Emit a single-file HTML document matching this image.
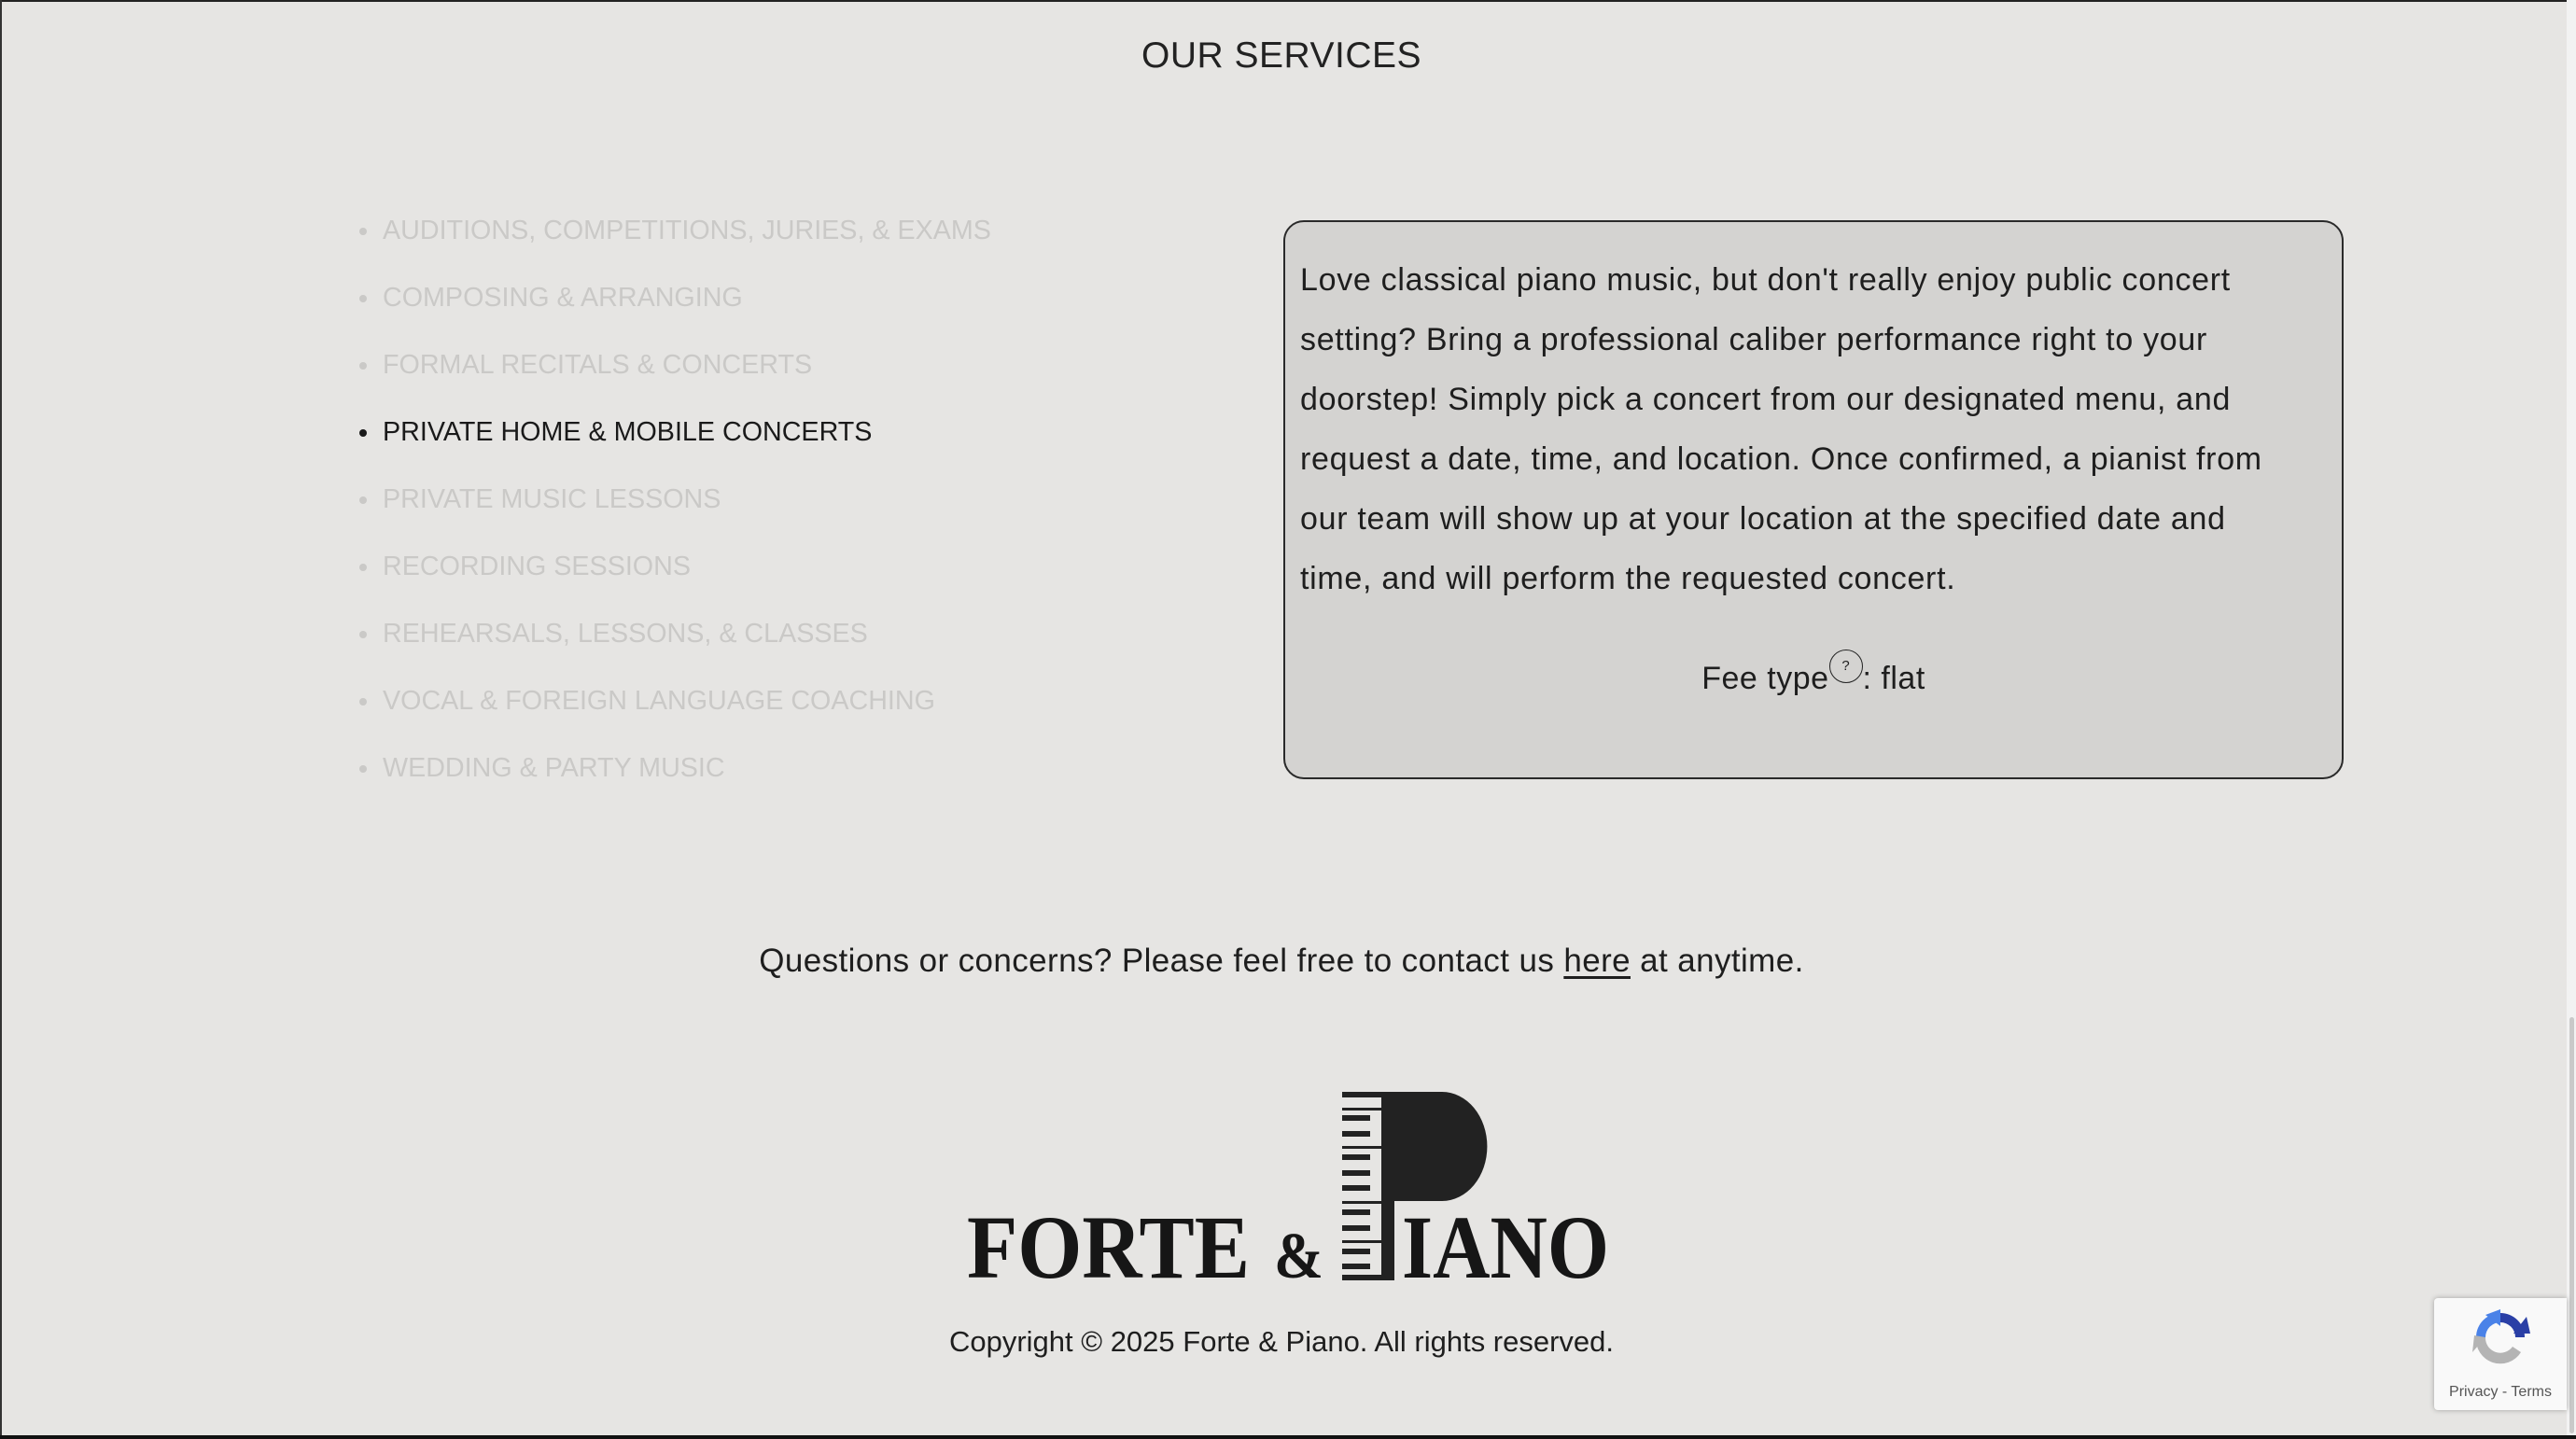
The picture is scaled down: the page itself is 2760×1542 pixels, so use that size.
<!DOCTYPE html>
<html><head><meta charset="utf-8">
<style>
html,body{margin:0;padding:0}
body{width:2760px;height:1542px;position:relative;overflow:hidden;background:#e6e5e3;font-family:"Liberation Sans",sans-serif;color:#1e1e1e}
.frame-top{position:absolute;left:0;top:0;width:2760px;height:2px;background:#222}
.frame-left{position:absolute;left:0;top:0;width:2px;height:1542px;background:#333}
.frame-bot{position:absolute;left:0;top:1538px;width:2760px;height:4px;background:#111}
.sb{position:absolute;left:2750px;top:0;width:10px;height:1538px;background:#f2f2f2}
.thumb{position:absolute;left:2753px;top:1090px;width:5px;height:446px;background:#c9c9c9;border-radius:3px}
h1{position:absolute;left:0;width:2746px;top:38px;margin:0;text-align:center;font-weight:normal;font-size:39px;letter-spacing:0.5px;color:#222}
ul{position:absolute;left:385px;top:223px;margin:0;padding:0;list-style:none}
li{position:relative;height:72px;line-height:48px;font-size:28.7px;padding-left:25px;color:#cac9c7;white-space:nowrap}
li:before{content:"";position:absolute;left:0;top:21px;width:8px;height:8px;border-radius:50%;background:#cac9c7}
li.on{color:#1a1a1a}
li.on:before{background:#1a1a1a}
.box{position:absolute;left:1375px;top:236px;width:1136px;height:599px;border:2px solid #2a2a2a;border-radius:22px;background:#d4d3d1;box-sizing:border-box}
.para{position:absolute;left:16px;top:30px;font-size:34px;letter-spacing:0.7px;line-height:64px;white-space:nowrap;color:#1e1e1e}
.fee{position:absolute;left:0;width:100%;top:458px;text-align:center;font-size:34px;letter-spacing:0.5px}
.q{display:inline-block;width:36px;height:36px;border:1.5px solid #222;border-radius:50%;font-size:15px;line-height:34px;text-align:center;vertical-align:20px;box-sizing:border-box;letter-spacing:0}
.contact{position:absolute;left:0;width:2746px;top:1010px;text-align:center;font-size:35px;letter-spacing:0.4px}
.contact u{text-underline-offset:5px}
.copy{position:absolute;left:0;width:2746px;top:1420px;text-align:center;font-size:31px}
.cap{position:absolute;left:2608px;top:1391px;width:142px;height:120px;background:#f9f9f9;border-radius:4px 0 0 4px;box-shadow:0 0 6px rgba(0,0,0,.3)}
.cap span{position:absolute;left:0;width:142px;top:92px;text-align:center;font-size:16px;color:#555}
</style></head><body>
<div class="frame-top"></div><div class="frame-left"></div>
<div class="sb"></div><div class="thumb"></div>
<h1>OUR SERVICES</h1>
<ul>
<li>AUDITIONS, COMPETITIONS, JURIES, &amp; EXAMS</li>
<li>COMPOSING &amp; ARRANGING</li>
<li>FORMAL RECITALS &amp; CONCERTS</li>
<li class="on">PRIVATE HOME &amp; MOBILE CONCERTS</li>
<li>PRIVATE MUSIC LESSONS</li>
<li>RECORDING SESSIONS</li>
<li>REHEARSALS, LESSONS, &amp; CLASSES</li>
<li>VOCAL &amp; FOREIGN LANGUAGE COACHING</li>
<li>WEDDING &amp; PARTY MUSIC</li>
</ul>
<div class="box">
<div class="para">Love classical piano music, but don't really enjoy public concert<br>setting? Bring a professional caliber performance right to your<br>doorstep! Simply pick a concert from our designated menu, and<br>request a date, time, and location. Once confirmed, a pianist from<br>our team will show up at your location at the specified date and<br>time, and will perform the requested concert.</div>
<div class="fee">Fee type<span class="q">?</span>: flat</div>
</div>
<div class="contact">Questions or concerns? Please feel free to contact us <u>here</u> at anytime.</div>
<svg style="position:absolute;left:1030px;top:1165px" width="700" height="210" viewBox="1030 1165 700 210">
<text x="1036" y="1369" font-family="Liberation Serif,serif" font-weight="bold" font-size="96" textLength="303" lengthAdjust="spacingAndGlyphs" fill="#161616">FORTE</text>
<text x="1365" y="1369" font-family="Liberation Serif,serif" font-weight="bold" font-size="70" textLength="53" lengthAdjust="spacingAndGlyphs" fill="#161616">&amp;</text>
<text x="1502" y="1369" font-family="Liberation Serif,serif" font-weight="bold" font-size="96" textLength="222" lengthAdjust="spacingAndGlyphs" fill="#161616">IANO</text>
<path d="M1480 1170 H1545 A48 58 0 0 1 1545 1287 H1494 V1372 H1480 Z" fill="#222"/>
<rect x="1438" y="1170" width="44" height="6" fill="#222"/>
<rect x="1438" y="1366" width="56" height="6" fill="#222"/>
<g fill="#222">
<rect x="1438" y="1187" width="42" height="3"/><rect x="1438" y="1195" width="30" height="6"/>
<rect x="1438" y="1212" width="30" height="6"/><rect x="1438" y="1228" width="42" height="3"/>
<rect x="1438" y="1237" width="30" height="6"/><rect x="1438" y="1254" width="30" height="6"/>
<rect x="1438" y="1270" width="30" height="6"/><rect x="1438" y="1287" width="42" height="3"/>
<rect x="1438" y="1296" width="30" height="6"/><rect x="1438" y="1313" width="30" height="6"/>
<rect x="1438" y="1329" width="42" height="3"/><rect x="1438" y="1338" width="30" height="6"/>
<rect x="1438" y="1354" width="30" height="6"/>
</g>
</svg>
<div class="copy">Copyright © 2025 Forte &amp; Piano. All rights reserved.</div>
<div class="frame-bot"></div>
<div class="cap">
<svg style="position:absolute;left:36px;top:10px" width="70" height="76" viewBox="-4 0 64 76">
<path d="M28 6 A26 26 0 0 1 54 32 L44 32 A16 16 0 0 0 28 16 Z" fill="#2a3fa6"/>
<path d="M42 28 L60 28 L56 10 Z" fill="#2a3fa6"/>
<path d="M2 32 A26 26 0 0 1 28 6 L28 16 A16 16 0 0 0 12 32 Z" fill="#4a82e8"/>
<path d="M12 8 L28 2 L28 20 Z" fill="#4a82e8"/>
<path d="M2 32 A26 26 0 0 0 50 48 L41 42 A16 16 0 0 1 12 32 Z" fill="#b4b4b4"/>
<path d="M-2 48 L12 32 L0 30 Z" fill="#b4b4b4"/>
</svg>
<span>Privacy - Terms</span></div>
</body></html>
